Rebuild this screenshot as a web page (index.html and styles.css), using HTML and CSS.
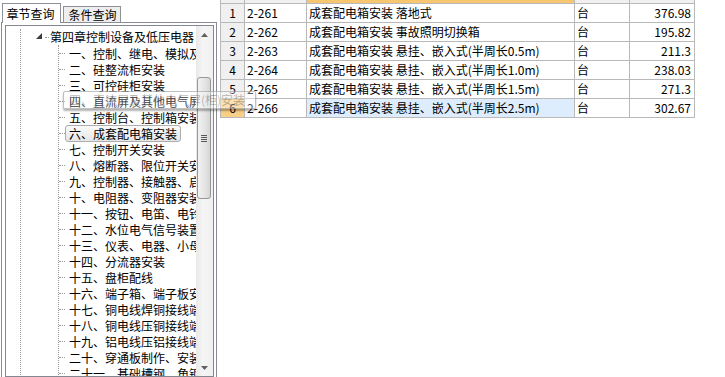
FILE: index.html
```html
<!DOCTYPE html>
<html lang="zh">
<head>
<meta charset="utf-8">
<title>章节查询</title>
<link rel="stylesheet" href="styles.css">
</head>
<body>
<div class="app">
  <div class="left">
    <div class="tabs">
      <div class="tab active">章节查询</div>
      <div class="tab">条件查询</div>
    </div>
    <div class="pane">
      <div class="treebox">
        <div class="tree">
          <div class="lvl0">
            <div class="node chapter">
              <svg class="exp" width="6" height="6" viewBox="0 0 6 6"><polygon points="6,0 6,6 0,6" fill="#3c3c3c"/></svg>
              <span class="hdots"></span>
              <span class="label">第四章控制设备及低压电器</span>
            </div>
            <div class="children">
              <div class="node child"><span class="label">一、控制、继电、模拟及配电屏安装</span></div>
              <div class="node child"><span class="label">二、硅整流柜安装</span></div>
              <div class="node child"><span class="label">三、可控硅柜安装</span></div>
              <div class="node child"><span class="label">四、直流屏及其他电气屏(柜)安装</span></div>
              <div class="node child"><span class="label">五、控制台、控制箱安装</span></div>
              <div class="node child"><span class="label selected">六、成套配电箱安装</span></div>
              <div class="node child"><span class="label">七、控制开关安装</span></div>
              <div class="node child"><span class="label">八、熔断器、限位开关安装</span></div>
              <div class="node child"><span class="label">九、控制器、接触器、启动器安装</span></div>
              <div class="node child"><span class="label">十、电阻器、变阻器安装</span></div>
              <div class="node child"><span class="label">十一、按钮、电笛、电铃安装</span></div>
              <div class="node child"><span class="label">十二、水位电气信号装置安装</span></div>
              <div class="node child"><span class="label">十三、仪表、电器、小母线安装</span></div>
              <div class="node child"><span class="label">十四、分流器安装</span></div>
              <div class="node child"><span class="label">十五、盘柜配线</span></div>
              <div class="node child"><span class="label">十六、端子箱、端子板安装</span></div>
              <div class="node child"><span class="label">十七、铜电线焊铜接线端子</span></div>
              <div class="node child"><span class="label">十八、铜电线压铜接线端子</span></div>
              <div class="node child"><span class="label">十九、铝电线压铝接线端子</span></div>
              <div class="node child"><span class="label">二十、穿通板制作、安装</span></div>
              <div class="node child"><span class="label">二十一、基础槽钢、角钢安装</span></div>
            </div>
          </div>
        </div>
        <div class="vscroll">
          <div class="sbtn"><svg width="7" height="4" viewBox="0 0 7 4"><polygon points="3.5,0 7,4 0,4" fill="#606060"/></svg></div>
          <div class="track">
            <div class="thumb"><span class="grip"></span></div>
          </div>
          <div class="sbtn"><svg width="7" height="4" viewBox="0 0 7 4"><polygon points="0,0 7,0 3.5,4" fill="#606060"/></svg></div>
        </div>
      </div>
    </div>
  </div>
  <div class="right">
    <div class="grid">
      <div class="c hdr"></div><div class="c hdr"></div><div class="c hdr sort"></div><div class="c hdr"></div><div class="c hdr"></div>

      <div class="c rn">1</div><div class="c">2-261</div><div class="c">成套配电箱安装 落地式</div><div class="c">台</div><div class="c num">376.98</div>
      <div class="c rn">2</div><div class="c">2-262</div><div class="c">成套配电箱安装 事故照明切换箱</div><div class="c">台</div><div class="c num">195.82</div>
      <div class="c rn">3</div><div class="c">2-263</div><div class="c">成套配电箱安装 悬挂、嵌入式(半周长0.5m)</div><div class="c">台</div><div class="c num">211.3</div>
      <div class="c rn">4</div><div class="c">2-264</div><div class="c">成套配电箱安装 悬挂、嵌入式(半周长1.0m)</div><div class="c">台</div><div class="c num">238.03</div>
      <div class="c rn">5</div><div class="c">2-265</div><div class="c">成套配电箱安装 悬挂、嵌入式(半周长1.5m)</div><div class="c">台</div><div class="c num">271.3</div>
      <div class="c rn cur">6</div><div class="c">2-266</div><div class="c sel">成套配电箱安装 悬挂、嵌入式(半周长2.5m)</div><div class="c">台</div><div class="c num">302.67</div>
    </div>
  </div>
</div>
<div class="ghost">四、直流屏及其他电气屏(柜)安装</div>
</body>
</html>
```

FILE: styles.css
```css
* { box-sizing: border-box; }
html, body {
  margin: 0;
  padding: 0;
  background: #ffffff;
}
body {
  width: 725px;
  height: 377px;
  overflow: hidden;
  position: relative;
  font-family: "Noto Sans CJK SC", "Noto Sans", sans-serif;
  font-size: 12px;
  color: #000;
}
.app {
  display: flex;
  height: 377px;
  overflow: hidden;
}
.left {
  width: 217px;
  flex: none;
  display: flex;
  flex-direction: column;
}
.tabs {
  height: 22px;
  display: flex;
  align-items: flex-end;
  padding-left: 2px;
  position: relative;
  z-index: 2;
}
.tab {
  height: 16px;
  width: 58px;
  margin-left: 2px;
  border: 1px solid #8e9197;
  border-bottom: none;
  background: #eeeeee;
  line-height: 15px;
  text-align: center;
  font-size: 12px;
  padding-left: 1px;
}
.tab.active {
  height: 20px;
  width: 59px;
  margin-left: 0;
  margin-bottom: -1px;
  background: #ffffff;
  line-height: 19px;
  padding-left: 0;
  padding-right: 2px;
}
.pane {
  margin-left: 1px;
  flex: 1;
  border: 1px solid #898c95;
  border-bottom: none;
  background: #ffffff;
  padding: 2px 2px 0 3px;
}
.treebox {
  height: 352px;
  width: 209px;
  border: 1px solid #828790;
  display: flex;
}
.tree {
  flex: 1;
  overflow: hidden;
  padding-top: 3px;
  white-space: nowrap;
}
.lvl0 {
  margin-left: 14px;
  border-left: 1px dotted #9a9a9a;
  min-height: 360px;
}
.node {
  height: 16px;
  line-height: 16px;
  display: flex;
  align-items: center;
}
.chapter {
  padding-left: 15px;
}
.exp {
  flex: none;
  display: block;
  margin-top: -3px;
}
.hdots {
  width: 4px;
  margin-left: 3px;
  border-top: 1px dotted #9a9a9a;
  flex: none;
}
.chapter .label {
  margin-left: 1px;
  border: none;
  padding: 0;
}
.children {
  margin-left: 37px;
  border-left: 1px dotted #9a9a9a;
  min-height: 340px;
}
.child::before {
  content: "";
  width: 6px;
  flex: none;
  border-top: 1px dotted #9a9a9a;
}
.label {
  display: inline-block;
  height: 17px;
  line-height: 15px;
  padding: 0 3px;
  border: 1px solid transparent;
  border-radius: 3px;
  flex: none;
}
.label.selected {
  border-color: #adadad;
  background: linear-gradient(#fafafa, #e6e6e6);
}
.vscroll {
  width: 17px;
  flex: none;
  display: flex;
  flex-direction: column;
  background: linear-gradient(90deg, #e8e8e8, #f5f5f5 40%, #f0f0f0);
}
.sbtn {
  height: 17px;
  flex: none;
  display: flex;
  align-items: center;
  justify-content: center;
}
.track {
  flex: 1;
  padding-top: 34px;
  padding-left: 1px;
  padding-right: 2px;
}
.thumb {
  height: 122px;
  border: 1px solid #979797;
  border-radius: 3px;
  background: linear-gradient(90deg, #f2f2f2, #e6e6e6 50%, #d6d6d6);
  display: flex;
  align-items: center;
  justify-content: center;
}
.grip {
  width: 6px;
  height: 7px;
  background: repeating-linear-gradient(#5a5a5a 0 1px, transparent 1px 2px);
}
.right {
  flex: 1;
  padding-left: 3px;
}
.grid {
  display: grid;
  grid-template-columns: 23px 61px 267px 54px 64px;
  grid-template-rows: 3px repeat(6, 18px);
  gap: 1px;
  background: #b9b9b9;
  border: 1px solid #b9b9b9;
  border-top: none;
  width: 475px;
}
.c {
  background: #ffffff;
  height: 18px;
  line-height: 18px;
  padding: 0 2px;
  white-space: nowrap;
  overflow: hidden;
}
.c.hdr {
  height: 3px;
  background: #f0f0f0;
}
.c.hdr.sort {
  background: #f7c670;
}
.c.rn {
  background: #f0f0f0;
  text-align: center;
  padding: 0;
}
.c.rn.cur {
  background: #f9cf87;
}
.c.sel {
  background: #ddedfd;
}
.c.num {
  text-align: right;
  padding-right: 3px;
}
.ghost {
  position: absolute;
  left: 63px;
  top: 91px;
  width: 193px;
  height: 18px;
  border: 1px solid rgba(140, 140, 140, 0.55);
  border-radius: 2px;
  background: rgba(255, 255, 255, 0.35);
  color: rgba(0, 0, 0, 0.28);
  line-height: 16px;
  padding-left: 5px;
  white-space: nowrap;
  box-shadow: 0 2px 2px rgba(0, 0, 0, 0.3);
}
```
